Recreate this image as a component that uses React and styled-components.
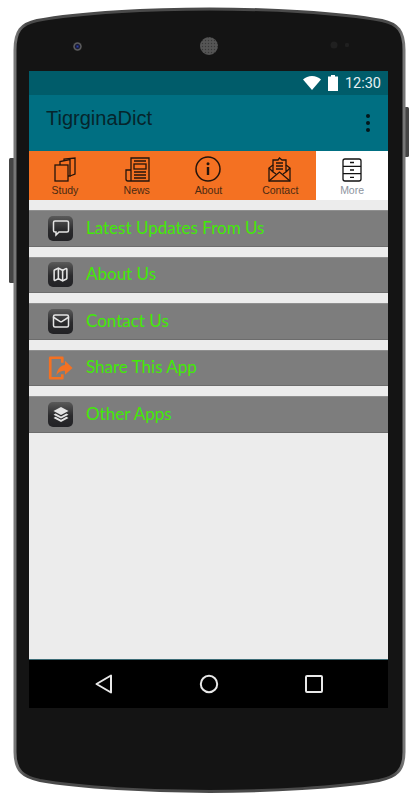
import React from 'react'
import styled, { createGlobalStyle } from 'styled-components'
import { Map, Mail } from 'lucide-react'

const GlobalStyle = createGlobalStyle`
  html, body {
    margin: 0;
    padding: 0;
    background: #fff;
  }
`

const Page = styled.div`
  position: relative;
  box-sizing: border-box;
  width: 417px;
  height: 800px;
  padding: 71px 29px 92px;
  overflow: hidden;
`

const Bezel = styled.svg`
  position: absolute;
  top: 0;
  left: 0;
`

const Screen = styled.div`
  position: relative;
  display: flex;
  flex-direction: column;
  height: 637px;
  background: #ececec;
`

const StatusBar = styled.div`
  display: flex;
  align-items: center;
  justify-content: flex-end;
  gap: 7px;
  height: 24px;
  padding-right: 7px;
  background: #005c6a;
`

const Clock = styled.span`
  font: 400 14.5px Roboto, sans-serif;
  color: #e6f0f2;
`

const AppBar = styled.div`
  display: flex;
  justify-content: space-between;
  height: 56px;
  padding: 11px 18px 0 17px;
  box-sizing: border-box;
  background: #006f82;
`

const Title = styled.div`
  font: 400 20px/25px 'Liberation Sans', Arial, sans-serif;
  color: #06252c;
`

const Dots = styled.div`
  display: flex;
  flex-direction: column;
  gap: 3px;
  margin-top: 8px;
`

const Dot = styled.i`
  width: 4px;
  height: 4px;
  border-radius: 50%;
  background: #03171b;
`

const Tabs = styled.div`
  display: grid;
  grid-template-columns: repeat(5, 1fr);
  height: 49px;
`

const Tab = styled.div`
  display: flex;
  flex-direction: column;
  align-items: center;
  padding-top: 5px;
  box-sizing: border-box;
  background: ${(p) => (p.$active ? '#ffffff' : '#f47122')};
  color: ${(p) => (p.$active ? '#8d94a0' : '#4a2a12')};
  font: 400 10.5px/12px 'Liberation Sans', Arial, sans-serif;
`

const TabIcon = styled.svg`
  display: block;
  fill: none;
  stroke: #24140c;
  stroke-width: 1.3;
`

const Menu = styled.div`
  display: flex;
  flex-direction: column;
  gap: 10px;
  padding-top: 10px;
`

const Row = styled.div`
  display: flex;
  align-items: center;
  height: 36.5px;
  box-sizing: border-box;
  padding-left: 19px;
  background: #7d7d7d;
  border-top: 1px solid #8f8f8f;
  border-bottom: 1px solid #6c6c6c;
`

const IconSlot = styled.div`
  display: flex;
  align-items: center;
  justify-content: center;
  width: 25px;
  height: 25px;
  margin-right: 13px;
`

const Tile = styled(IconSlot)`
  border-radius: 5px;
  background: linear-gradient(#5a5a5a, #2a2a2c 55%, #222225);
  color: #e4e4e4;
`

const RowLabel = styled.span`
  margin-top: -2px;
  font: 400 17px Lato, sans-serif;
  color: #42ea06;
`

const NavBar = styled.div`
  display: grid;
  grid-template-columns: repeat(3, 105px);
  justify-content: center;
  justify-items: center;
  align-items: center;
  margin-top: auto;
  height: 48px;
  background: #000;
  border-top: 1px solid #3d6c76;
`

function BezelArt() {
  return (
    <Bezel width="417" height="800" viewBox="0 0 417 800">
      <defs>
        <linearGradient id="edge" x1="0" x2="1" y1="0" y2="0">
          <stop offset="0" stopColor="#777" />
          <stop offset="0.03" stopColor="#4a4a4a" />
          <stop offset="0.97" stopColor="#4a4a4a" />
          <stop offset="1" stopColor="#777" />
        </linearGradient>
        <radialGradient id="lens">
          <stop offset="0" stopColor="#2a3ea8" />
          <stop offset="0.45" stopColor="#15162e" />
          <stop offset="0.75" stopColor="#666" />
          <stop offset="1" stopColor="#333" />
        </radialGradient>
        <pattern id="mesh" width="3" height="3" patternUnits="userSpaceOnUse">
          <rect width="3" height="3" fill="#555" />
          <circle cx="1.5" cy="1.5" r="0.7" fill="#383838" />
        </pattern>
      </defs>
      <rect x="9" y="158" width="6" height="125" rx="1.5" fill="#454545" />
      <rect x="404" y="107" width="5" height="50" rx="1.5" fill="#454545" />
      <path
        d="M15 50 C15 31 21 24 37 20.5 C81 12.5 150 9 209.5 9 C269 9 338 12.5 382 20.5 C398 24 404 31 404 50 L404 752 C404 771 396 777 379 780.5 C339 787.5 270 791.5 209.5 791.5 C149 791.5 80 787.5 40 780.5 C23 777 15 771 15 752 Z"
        fill="#141414"
        stroke="url(#edge)"
        strokeWidth="3"
      />
      <circle cx="77.5" cy="46.5" r="4.5" fill="url(#lens)" />
      <circle cx="209" cy="46" r="9" fill="url(#mesh)" />
      <circle cx="334" cy="45" r="3.5" fill="#202020" />
      <circle cx="347" cy="45" r="2.2" fill="#202020" />
    </Bezel>
  )
}

function StudyIcon() {
  return (
    <TabIcon width="30" height="28" viewBox="0 0 30 28">
      <path d="M10 9V5.500l10-2V20h-2" />
      <path d="M14 5V3l11-1v16l-5 2" />
      <rect x="5" y="9" width="13" height="16" />
    </TabIcon>
  )
}

function NewsIcon() {
  return (
    <TabIcon width="30" height="28" viewBox="0 0 30 28">
      <path d="M9 25V2h18v23H6a2 2 0 0 1-2-2v-9h5" />
      <rect x="12" y="8" width="12" height="5" />
      <path d="M12 5h12M12 16h12M12 19h12M12 22h12" />
    </TabIcon>
  )
}

function AboutIcon() {
  return (
    <TabIcon width="30" height="28" viewBox="0 0 30 28">
      <circle cx="15" cy="13" r="12" strokeWidth="1.5" />
      <rect x="13.800" y="11" width="2.400" height="8" fill="#24140c" stroke="none" />
      <circle cx="15" cy="7.800" r="1.500" fill="#24140c" stroke="none" />
    </TabIcon>
  )
}

function ContactIcon() {
  return (
    <TabIcon width="30" height="28" viewBox="0 0 30 28">
      <path d="M4 12v13h21V12l-4-3V4h-4l-2.500-2L13 4H8v5z" />
      <path d="M4 12l4 4M25 12l-4 4M8 9v7l3 2M21 9v7l-3 2M4 25l10.500-9L25 25" />
      <path d="M11 7h7M11 10h7M11 13h7" />
    </TabIcon>
  )
}

function MoreIcon() {
  return (
    <TabIcon width="30" height="28" viewBox="0 0 30 28">
      <rect x="6" y="3" width="18" height="22" rx="2" stroke="#111" />
      <path d="M6 10.300h18M6 17.600h18M13 6.500h4M13 14h4M13 21.300h4" stroke="#111" />
    </TabIcon>
  )
}

function ChatGlyph() {
  return (
    <svg width="18" height="18" viewBox="0 0 18 18" fill="none" stroke="currentColor" strokeWidth="1.5">
      <path d="M3 2h12a1.500 1.500 0 0 1 1.500 1.500v8A1.500 1.500 0 0 1 15 13H7l-3 3v-3H3a1.500 1.500 0 0 1-1.500-1.500v-8A1.500 1.500 0 0 1 3 2z" />
    </svg>
  )
}

function LayersGlyph() {
  return (
    <svg width="18" height="18" viewBox="0 0 18 18" fill="currentColor">
      <path d="M9 2l7.500 4L9 10 1.500 6z" />
      <path d="M3.500 8.500L9 11.500l5.500-3 2 1.200L9 13.500 1.500 9.700z" />
      <path d="M3.500 11.800L9 14.800l5.500-3 2 1.200L9 17 1.500 13z" />
    </svg>
  )
}

function ShareGlyph() {
  return (
    <svg width="28" height="28" viewBox="0 0 28 28">
      <path d="M16 8V2.500H2.500v23H16V21" fill="none" stroke="#f47122" strokeWidth="3" strokeLinejoin="round" />
      <path d="M19 6l8.500 8-8.500 7.500V17c-4 0-7 1-9.500 5 .5-6 4-11 9.500-11.500z" fill="#f47122" />
    </svg>
  )
}

const tabs = [
  { label: 'Study', Icon: StudyIcon },
  { label: 'News', Icon: NewsIcon },
  { label: 'About', Icon: AboutIcon },
  { label: 'Contact', Icon: ContactIcon },
  { label: 'More', Icon: MoreIcon, active: true },
]

const rows = [
  { label: 'Latest Updates From Us', glyph: <ChatGlyph /> },
  { label: 'About Us', glyph: <Map size={17} strokeWidth={2.2} /> },
  { label: 'Contact Us', glyph: <Mail size={18} strokeWidth={2} /> },
  { label: 'Share This App', share: true },
  { label: 'Other Apps', glyph: <LayersGlyph /> },
]

export default function App() {
  return (
    <Page>
      <GlobalStyle />
      <BezelArt />
      <Screen>
        <StatusBar>
          <svg width="18" height="14" viewBox="0 0 18 14">
            <path d="M9 14L0 3.500C2.500 1.300 5.500 0 9 0s6.500 1.300 9 3.500z" fill="#fff" />
          </svg>
          <svg width="10" height="16" viewBox="0 0 10 16">
            <path d="M3 0h4v1.500h3V16H0V1.500h3z" fill="#fff" />
          </svg>
          <Clock>12:30</Clock>
        </StatusBar>
        <AppBar>
          <Title>TigrginaDict</Title>
          <Dots>
            <Dot />
            <Dot />
            <Dot />
          </Dots>
        </AppBar>
        <Tabs>
          {tabs.map(({ label, Icon, active }) => (
            <Tab key={label} $active={active}>
              <Icon />
              {label}
            </Tab>
          ))}
        </Tabs>
        <Menu>
          {rows.map((row) => (
            <Row key={row.label}>
              {row.share ? <IconSlot><ShareGlyph /></IconSlot> : <Tile>{row.glyph}</Tile>}
              <RowLabel>{row.label}</RowLabel>
            </Row>
          ))}
        </Menu>
        <NavBar>
          <svg width="20" height="22" viewBox="0 0 20 22" fill="none" stroke="#e8e8e8" strokeWidth="2" strokeLinejoin="round">
            <path d="M17 2.500v17L2.500 11z" />
          </svg>
          <svg width="20" height="20" viewBox="0 0 20 20" fill="none" stroke="#e8e8e8" strokeWidth="2">
            <circle cx="10" cy="10" r="8.200" />
          </svg>
          <svg width="20" height="20" viewBox="0 0 20 20" fill="none" stroke="#e8e8e8" strokeWidth="2" strokeLinejoin="round">
            <rect x="2" y="2" width="16" height="16" rx="1" />
          </svg>
        </NavBar>
      </Screen>
    </Page>
  )
}
